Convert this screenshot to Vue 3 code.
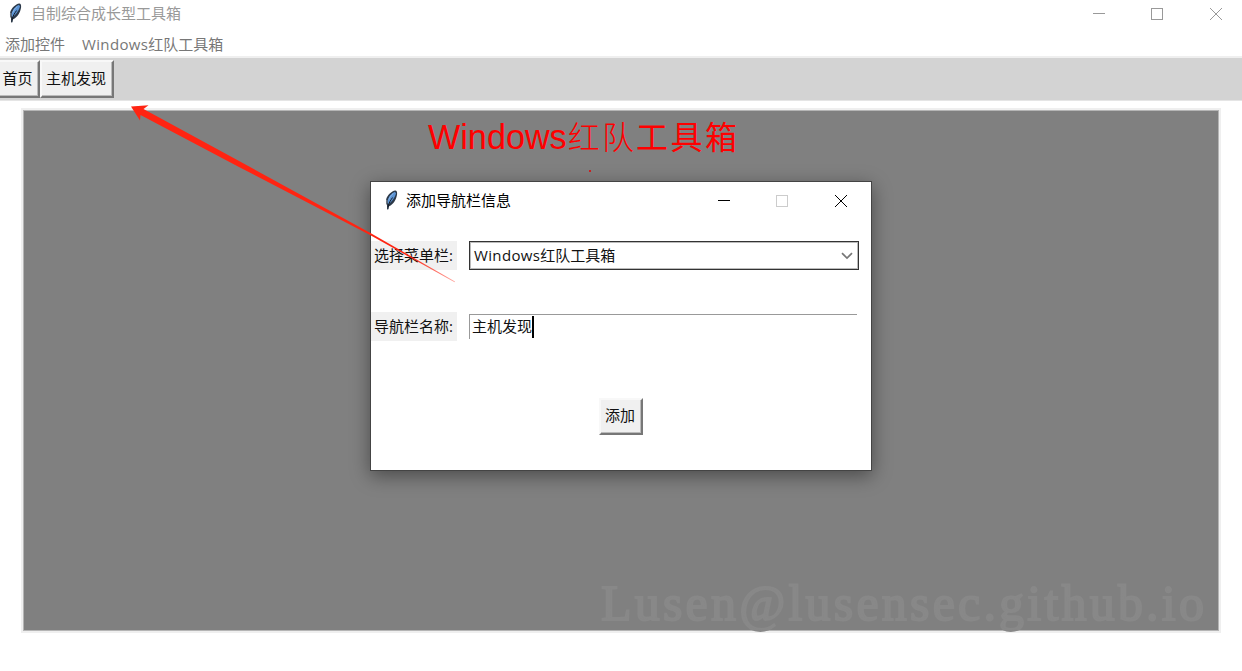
<script setup>
const navButtons = ['首页', '主机发现']
</script>

<template>
  <div class="app">
    <header class="titlebar">
      <svg class="feather" width="14" height="20" viewBox="0 0 14 20">
        <path d="M11.3 .6C7.6 1.2 3.4 5 2.1 9.6c-.4 2.2 0 4.2.9 5.6L3 19.4l1.5-.2.6-3c4.4-1.9 7.4-7 8-12 .2-2-.4-3.5-1.8-3.6z" fill="#2b3848" />
        <path d="M10.9 1.7C7.6 3.2 4.4 6.6 3.6 11l.6 3.2C8 11.6 11.2 7.2 12 3.2z" fill="#5b93d4" />
        <path d="M9.4 3.4C7.2 5 5.6 7.2 4.8 9.6" fill="none" stroke="#8db9e8" stroke-width="1" />
        <path d="M8.6 7.5C7 10 5 12 4 17" fill="none" stroke="#151d26" stroke-width="1" />
        <path d="M2.7 9.8l.3 3.6" stroke="#9aa5ae" stroke-width=".9" />
      </svg>
      <span class="title">自制综合成长型工具箱</span>
      <svg class="controls" width="130" height="14" viewBox="0 0 130 14" fill="none" stroke="#999">
        <path d="M0 7.5h12" />
        <rect x="58.5" y="2.5" width="11" height="11" />
        <path d="M117 2l12 12M129 2l-12 12" />
      </svg>
    </header>

    <nav class="menu">
      <span>添加控件</span>
      <span><span class="latin">Windows</span>红队工具箱</span>
    </nav>

    <div class="toolbar">
      <button v-for="label in navButtons" :key="label" class="btn">{{ label }}</button>
    </div>

    <main class="canvas">
      <h1><span class="word">Windows</span><span class="thin">红队</span><span class="wide">工具箱</span></h1>
      <div class="dot"></div>
    </main>

    <div class="watermark">Lusen@lusensec.github.io</div>

    <section class="dialog">
      <header class="dialog-bar">
        <svg class="feather" width="14" height="20" viewBox="0 0 14 20">
          <path d="M11.3 .6C7.6 1.2 3.4 5 2.1 9.6c-.4 2.2 0 4.2.9 5.6L3 19.4l1.5-.2.6-3c4.4-1.9 7.4-7 8-12 .2-2-.4-3.5-1.8-3.6z" fill="#2b3848" />
          <path d="M10.9 1.7C7.6 3.2 4.4 6.6 3.6 11l.6 3.2C8 11.6 11.2 7.2 12 3.2z" fill="#5b93d4" />
          <path d="M9.4 3.4C7.2 5 5.6 7.2 4.8 9.6" fill="none" stroke="#8db9e8" stroke-width="1" />
          <path d="M8.6 7.5C7 10 5 12 4 17" fill="none" stroke="#151d26" stroke-width="1" />
          <path d="M2.7 9.8l.3 3.6" stroke="#9aa5ae" stroke-width=".9" />
        </svg>
        <span class="title">添加导航栏信息</span>
        <svg class="controls" width="130" height="14" viewBox="0 0 130 14" fill="none" stroke="#000">
          <path d="M0 6.5h12" />
          <rect x="58.5" y="1.5" width="11" height="11" stroke="#ccc" />
          <path d="M117 1l12 12M129 1l-12 12" />
        </svg>
      </header>
      <div class="row">
        <label>选择菜单栏:</label>
        <div class="select">
          <span><span class="latin">Windows</span>红队工具箱</span>
          <svg width="12" height="8" viewBox="0 0 12 8"><path d="M1 1.2l5 4.8 5-4.8" fill="none" stroke="#777" stroke-width="1.7" /></svg>
        </div>
      </div>
      <div class="row second">
        <label>导航栏名称:</label>
        <div class="entry"><span>主机发现</span><i class="caret"></i></div>
      </div>
      <button class="btn add">添加</button>
    </section>

    <svg class="arrow" width="330" height="184" viewBox="0 0 330 184">
      <defs>
        <linearGradient id="fade" gradientUnits="userSpaceOnUse" x1="0" y1="0" x2="324" y2="177">
          <stop offset="0.86" stop-color="#ff2412" />
          <stop offset="1" stop-color="#ff2412" stop-opacity=".4" />
        </linearGradient>
      </defs>
      <path d="M1 1.5L18.5 .3 13.5 4 110 56.5 240 127.7 325 176.6 324.6 177.3 240 130 108 61.5 10.5 10 10 15.5z" fill="url(#fade)" />
    </svg>
  </div>
</template>

<style>
body { background: #fff; overflow: hidden; }
</style>

<style scoped>
.app {
  position: relative;
  width: 1242px;
  height: 671px;
  overflow: hidden;
  display: flex;
  flex-direction: column;
  background: #fff;
  font: 15px/20px "Open Sans", "Noto Sans CJK SC", sans-serif;
  color: #111;
  white-space: nowrap;
}
.titlebar { display: flex; height: 30px; padding: 3px 19px 0 8px; box-sizing: border-box; align-items: flex-start; }
.feather { flex: none; }
.title { margin-left: 9px; }
.titlebar .title { color: #999; line-height: 20px; }
.controls { margin-left: auto; }
.titlebar .controls { margin: 3px 0 0 auto; }
.menu { display: flex; gap: 17px; height: 26px; padding: 3px 0 0 5px; box-sizing: border-box; line-height: 22px; color: #777; }
.latin { letter-spacing: .35px; }
.toolbar {
  display: flex;
  height: 45px;
  box-sizing: border-box;
  border-top: 2px solid #efefef;
  border-bottom: 1px solid #e5e5e5;
  background: #d3d3d3;
  padding-top: 2px;
}
.btn {
  box-sizing: border-box;
  height: 38px;
  margin: 0;
  padding: 0 5px;
  font: inherit;
  color: #111;
  background: #f0f0f0;
  border: 2px solid;
  border-color: #f8f8f8 #777 #777 #f8f8f8;
  box-shadow: inset -1px -1px #bbb;
}
.toolbar .btn { padding-bottom: 2px; }
.toolbar .btn:first-child { padding: 0 5px 2px 2px; border-left: 0; width: 40px; }
.toolbar .btn + .btn { width: 74px; padding: 0 6px 2px 4px; }
.canvas {
  box-sizing: border-box;
  width: 1200px;
  height: 525px;
  margin: 7px 0 0 21px;
  border: 2px solid #efefef;
  background: #808080;
  box-shadow: inset 0 0 0 1px #b5b5b5;
}
h1 {
  height: 40px;
  margin: 7px 0 0 405px;
  font: 400 34.2px/40px "Liberation Sans", "Noto Sans CJK SC", sans-serif;
  color: #f00;
}
h1 .thin { font-size: 32px; letter-spacing: 2.2px; font-weight: 300; margin-left: 1px; }
h1 .wide { font-size: 32px; letter-spacing: 2.5px; font-weight: 400; }
.dot { width: 2px; height: 2px; margin: 13px 0 0 566px; background: #c22; }
.watermark {
  position: absolute;
  left: 601px;
  top: 573px;
  font: 400 50px/60px "Liberation Serif", serif;
  letter-spacing: 3.2px;
  -webkit-text-stroke: 1.8px #888;
  color: #888;
}
.dialog {
  position: absolute;
  left: 370px;
  top: 181px;
  width: 502px;
  height: 290px;
  box-sizing: border-box;
  border: 1px solid #444;
  background: #fff;
  box-shadow: 0 5px 18px rgba(0, 0, 0, .42);
}
.dialog-bar { display: flex; height: 59px; padding: 8px 23px 0 13px; box-sizing: border-box; }
.dialog-bar .title { margin-left: 8px; color: #000; line-height: 21px; }
.dialog-bar .controls { margin-top: 4px; }
.row { display: flex; height: 29px; }
.row label { box-sizing: border-box; width: 86px; margin-right: 12px; padding-left: 3px; background: #f0f0f0; line-height: 29px; }
.select {
  box-sizing: border-box;
  width: 390px;
  display: flex;
  align-items: center;
  justify-content: space-between;
  padding: 0 5px 0 4px;
  border: 1px solid #333;
  box-shadow: inset 0 0 0 1px #bbb;
}
.select > span { padding-bottom: 2px; }
.second { margin-top: 42px; }
.entry {
  box-sizing: border-box;
  display: flex;
  align-items: center;
  width: 388px;
  height: 25px;
  margin-top: 2px;
  padding-left: 2px;
  border-top: 1px solid #999;
  border-left: 1px solid #999;
}
.entry span { padding-bottom: 2px; }
.caret { width: 2px; height: 22px; background: #000; }
.add { display: block; width: 44px; height: 37px; margin: 57px 0 0 228px; padding: 0 2px 3px 0; }
.arrow { position: absolute; left: 130px; top: 105px; }
</style>
